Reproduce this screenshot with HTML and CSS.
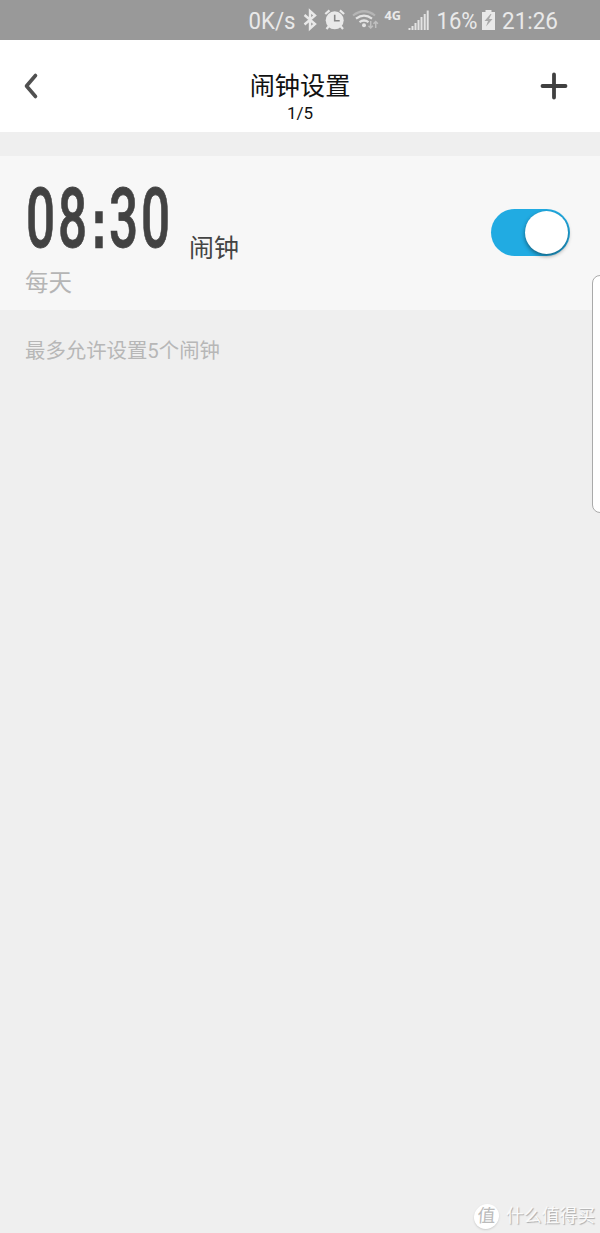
FILE: index.html
```html
<!DOCTYPE html>
<html lang="zh-CN">
<head>
<meta charset="utf-8">
<title>闹钟设置</title>
<link rel="stylesheet" href="styles.css">
</head>
<body>
<div class="screen">
  <div class="status">
    <svg class="status-art" width="600" height="40" viewBox="0 0 600 40">
      <g class="status-text">
        <text x="248.500" y="29" textLength="47" lengthAdjust="spacingAndGlyphs">0K/s</text>
        <text x="436.500" y="29" textLength="41" lengthAdjust="spacingAndGlyphs">16%</text>
        <text x="502" y="29" textLength="56" lengthAdjust="spacingAndGlyphs">21:26</text>
        <text class="network" x="384.500" y="20" textLength="16.500" lengthAdjust="spacingAndGlyphs">4G</text>
      </g>
      <path class="bluetooth" d="M304.500 15l10.500 9-5 4.500V11l5 4.500-10.500 9"/>
      <g class="alarm">
        <circle cx="334.700" cy="20.300" r="9"/>
        <path d="M329 26l-2.500 3M340.500 26l2.500 3M325.300 14l4.200-3.600M344.100 14l-4.200-3.600"/>
        <path class="hands" d="M334.700 14.800v6h5"/>
      </g>
      <g class="wifi">
        <path class="dim" d="M353 15.500q11-8.500 22 0"/>
        <path d="M356 18.700q8-6 16 0M359.500 22.200q4.500-3.400 9 0"/>
        <circle cx="364" cy="25.300" r="2"/>
        <path class="arrows" d="M370.700 21v7m-2.200-2.200l2.200 2.200 2.200-2.200M375.700 28v-6.500m-2.200 2.200l2.200-2.200 2.200 2.200"/>
      </g>
      <path class="signal" d="M409.500 30v-2M412.500 30v-4M415.500 30v-7M418.500 30v-10M421.500 30v-13M424.700 30V14M427.700 30V10.500"/>
      <path class="battery" d="M485.500 10h6v2h3.500v18h-13V12h3.500z"/>
      <path class="bolt" d="M490.500 14l-6 7h3.500l-2 5.500 6.500-7.500H489l2.500-5z"/>
    </svg>
  </div>
  <header class="header">
    <svg class="back" width="16" height="28" viewBox="0 0 16 28"><path d="M12.500 3.500L3.500 14l9 10.500"/></svg>
    <div class="heading">
      <h1>闹钟设置</h1>
      <p>1/5</p>
    </div>
    <svg class="add" width="28" height="28" viewBox="0 0 28 28"><path d="M14 2.500v23M2.500 14h23"/></svg>
  </header>
  <main>
    <section class="card">
      <div class="info">
        <div class="line">
          <svg class="time" width="146" height="66" viewBox="0 0 146 66">
            <text transform="scale(.61 1)" x="1.600 54.100 109.800 137.700 190.100" y="62.800">08<tspan class="colon">:</tspan>30</text>
          </svg>
          <span class="name">闹钟</span>
        </div>
        <div class="repeat">每天</div>
      </div>
      <div class="switch"><span class="knob"></span></div>
    </section>
    <p class="hint">最多允许设置5个闹钟</p>
  </main>
  <div class="edge-panel"></div>
  <div class="watermark"><span class="badge">值</span><span class="brand">什么值得买</span></div>
</div>
</body>
</html>
```

FILE: styles.css
```css
* { box-sizing: border-box; }
body { margin: 0; font-family: Roboto, "Noto Sans CJK SC", sans-serif; }
h1, p { margin: 0; font-weight: 400; }
svg { display: block; flex: none; }

.screen { position: relative; width: 600px; height: 1233px; overflow: hidden; background: #efefef; }
.status { height: 40px; background: #999; }
.status-text { font-size: 24.5px; fill: #e9e9e9; }
.network { font-size: 12px; font-weight: 700; font-family: "Open Sans", sans-serif; }
.bluetooth { fill: none; stroke: #e9e9e9; stroke-width: 2.4; }
.alarm { fill: #e9e9e9; stroke: #e9e9e9; stroke-width: 2.2; }
.alarm circle { stroke: none; }
.alarm .hands { fill: none; stroke: #888; stroke-width: 1.6; }
.wifi { fill: none; stroke: #e4e4e4; stroke-width: 2.2; }
.wifi circle { fill: #e4e4e4; stroke: none; }
.wifi .dim { stroke: #b5b5b5; }
.wifi .arrows { stroke: #c0c0c0; stroke-width: 1.5; }
.signal { stroke: #e4e4e4; stroke-width: 2; }
.battery { fill: #e9e9e9; }
.bolt { fill: #aaa; }

.header { display: grid; grid-template-columns: 28px 1fr 28px; align-items: start; height: 92px; padding: 0 32px 0 23px; background: #fff; }
.back { margin-top: 32px; }
.back path { fill: none; stroke: #505050; stroke-width: 3.6; stroke-linecap: round; stroke-linejoin: round; }
.add { margin-top: 32px; }
.add path { stroke: #404040; stroke-width: 3.8; stroke-linecap: round; }
.heading { padding: 28px 0 0 9px; text-align: center; color: #111; }
.heading h1 { font-size: 25.2px; line-height: 37px; }
.heading p { margin-top: -2px; font-size: 17px; line-height: 20px; }

.card { display: flex; justify-content: space-between; height: 154px; margin-top: 24px; padding: 28px 30px 0 25px; background: #f7f7f7; }
.line { display: flex; height: 82px; }
.time { overflow: visible; }
.time text { font-size: 84px; font-weight: 500; fill: #424242; stroke: #424242; stroke-width: .8px; }
.time .colon { font-family: "Liberation Sans", sans-serif; font-weight: 700; font-size: 69px; stroke-width: 2.5px; }
.name { margin: 47px 0 0 18px; font-size: 25px; line-height: 36px; color: #444; }
.repeat { padding-top: 1px; font-size: 23.5px; line-height: 32px; color: #b5b5b5; }
.switch { width: 79px; height: 47px; margin-top: 25px; padding: 2px; border-radius: 24px; background: #21abe2; display: flex; justify-content: flex-end; }
.knob { width: 43px; height: 43px; border-radius: 50%; background: #fff; box-shadow: 0 2px 4px rgba(0, 0, 0, .45); }
.hint { padding: 26px 25px 0; font-size: 20.4px; line-height: 30px; color: #b7b7b7; }

.edge-panel { position: absolute; left: 592px; top: 275px; width: 20px; height: 238px; border: 1px solid #aaa; border-radius: 8px; background: #fff; }
.watermark { position: absolute; right: 5px; bottom: 4px; display: flex; align-items: center; gap: 7px; height: 26px; }
.badge { width: 25px; height: 25px; border-radius: 50%; background: #fff; color: #bbb; font-size: 18px; line-height: 24px; text-align: center; box-shadow: 0 1px 2px #ccc; transform: skewX(-4deg); }
.brand { font-size: 17.8px; line-height: 26px; color: #fafafa; text-shadow: 1px 1px 1px #aaa; }
```
